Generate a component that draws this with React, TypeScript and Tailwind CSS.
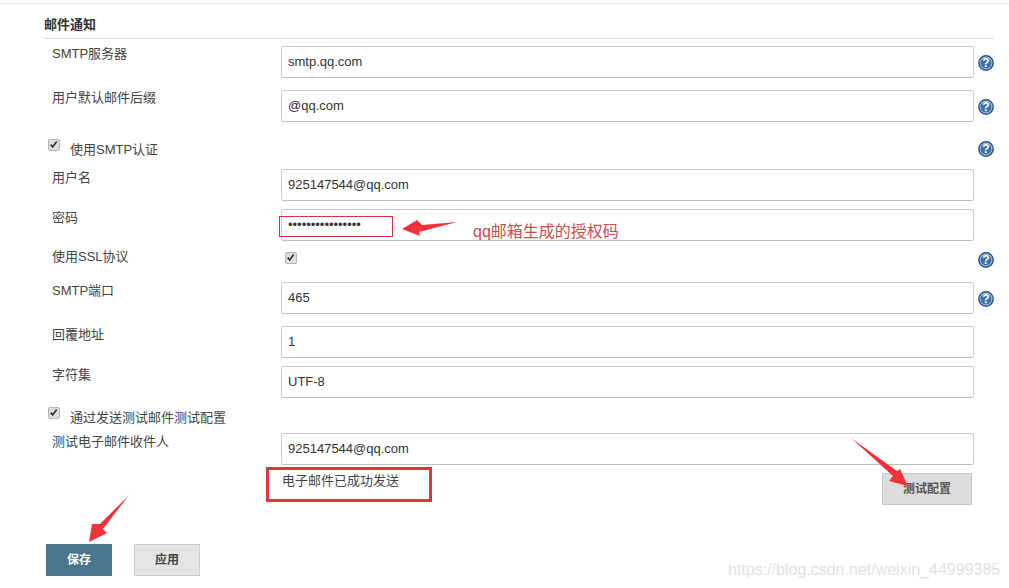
import React from "react";

const font = { fontFamily: '"Liberation Sans", "Noto Sans CJK SC", sans-serif' };

function Help() {
  return (
    <svg width="16" height="16" viewBox="0 0 16 16" className="block shrink-0">
      <circle cx="8" cy="8" r="7.9" fill="#22508f" />
      <circle cx="8" cy="8" r="6.4" fill="#c9d8e8" />
      <circle cx="8" cy="8" r="5.6" fill="#3f70a6" />
      <text x="8" y="12.2" textAnchor="middle" fontSize="12" fontWeight="700" fill="#fff" fontFamily="Liberation Sans">?</text>
    </svg>
  );
}

function Check() {
  return (
    <span className="block w-[12px] h-[12px] rounded-[2px] border border-[#b5b5b5] bg-[#dedede] shrink-0">
      <svg viewBox="0 0 12 12" className="block w-[10px] h-[10px]">
        <path d="M2 5.5 L4.5 8.3 L9.2 1.8" fill="none" stroke="#333" strokeWidth="2" />
      </svg>
    </span>
  );
}

function Field({ label, value, type = "text", help = false, className = "", labelClass = "pt-[1px]" }: { label: string; value: string; type?: string; help?: boolean; className?: string; labelClass?: string }) {
  return (
    <div className={"flex items-start pl-[52px] " + className}>
      <div className={"w-[229px] leading-[16px] " + labelClass}>{label}</div>
      <input
        readOnly
        type={type}
        value={value}
        className="w-[693px] h-[32px] px-[6px] pb-[1px] border border-[#cccccc] border-b-[#bdbdbd] rounded-[3px] bg-white text-[13px] text-[#333333] outline-none"
        style={font}
      />
      {help && (
        <span className="ml-[4px] mt-[9px]">
          <Help />
        </span>
      )}
    </div>
  );
}

export default function App() {
  return (
    <div className="relative w-[1009px] h-[588px] overflow-hidden bg-white text-[13px] text-[#444444]" style={font}>
      <div className="h-[4px] border-b border-[#e8e6d8]" />

      <div className="ml-[44px] mr-[15px] mt-[13px] pb-[5px] border-b border-[#dddddd] font-bold leading-[16px] text-[#333333]">
        邮件通知
      </div>

      <Field className="mt-[7px]" labelClass="pt-0" label="SMTP服务器" value="smtp.qq.com" help />
      <Field className="mt-[12px]" labelClass="pt-0" label="用户默认邮件后缀" value="@qq.com" help />

      <div className="h-[47px] flex items-start pl-[48px] pt-[20px]">
        <span className="-mt-[3px]">
          <Check />
        </span>
        <span className="ml-[10px] leading-[16px]">使用SMTP认证</span>
        <span className="ml-auto mr-[15px] -mt-[1px]">
          <Help />
        </span>
      </div>

      <Field label="用户名" value="925147544@qq.com" />
      <Field className="mt-[8px]" label="密码" type="password" value="aaaaaaaaaaaaaaaa" />

      <div className="h-[41px] flex items-start pl-[52px] pt-[8px]">
        <span className="w-[233px] leading-[16px]">使用SSL协议</span>
        <span className="mt-[3px]">
          <Check />
        </span>
        <span className="ml-auto mr-[15px] mt-[3px]">
          <Help />
        </span>
      </div>

      <Field label="SMTP端口" value="465" help />
      <Field className="mt-[12px]" label="回覆地址" value="1" />
      <Field className="mt-[8px]" label="字符集" value="UTF-8" />

      <div className="h-[35px] flex items-start pl-[48px] pt-[12px]">
        <span className="-mt-[3px]">
          <Check />
        </span>
        <span className="ml-[10px] leading-[16px]">通过发送测试邮件测试配置</span>
      </div>

      <Field label="测试电子邮件收件人" value="925147544@qq.com" />

      <div className="mt-[8px] flex items-start pl-[282px] pr-[37px] justify-between">
        <span className="leading-[16px]">电子邮件已成功发送</span>
        <button className="w-[90px] h-[32px] bg-[#dcdcdc] border border-[#c6c6c6] rounded-[1px] text-[12px] font-bold text-[#555555]">
          测试配置
        </button>
      </div>

      <div className="mt-[39px] ml-[46px] flex gap-[22px]">
        <button className="w-[66px] h-[32px] bg-[#4b758b] text-[12px] font-bold text-white">保存</button>
        <button className="w-[66px] h-[32px] bg-[#e4e4e4] border border-[#cccccc] text-[12px] font-bold text-[#444444]">应用</button>
      </div>

      {/* annotations */}
      <div className="absolute left-[279px] top-[216px] w-[114px] h-[21px] border border-[#c8383c]" />
      <div className="absolute left-[266px] top-[467px] w-[166px] h-[35px] border-[3px] border-[#e5343e]" />
      <div className="absolute left-[473px] top-[222px] text-[16px] leading-[20px] text-[#cf4a4a]">qq邮箱生成的授权码</div>
      <svg className="absolute left-0 top-0 pointer-events-none" width="1009" height="588" viewBox="0 0 1009 588">
        <polygon points="457,222 422,225 417,220 402,229 420,236 419,232" fill="#f0323a" />
        <polygon points="851,438 897,471 900,469 908,486 889,481 893,476" fill="#f0323a" />
        <polygon points="129,495 100,524 92,524 89,542 107,533 103,529" fill="#f0323a" />
      </svg>
      <div className="absolute left-[728px] top-[561px] text-[16px] leading-[18px] text-[#e2e2e2]">https://blog.csdn.net/weixin_44999385</div>
    </div>
  );
}
